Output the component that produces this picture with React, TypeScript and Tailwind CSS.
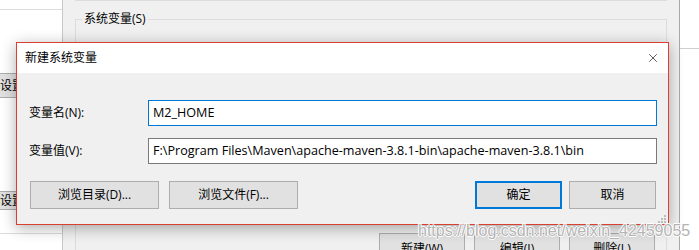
import { X } from "lucide-react";

const ui = "font-['Open_Sans','Noto_Sans_CJK_SC',sans-serif]";

function WinButton({
  label,
  primary,
  className = "",
}: {
  label: string;
  primary?: boolean;
  className?: string;
}) {
  return (
    <div
      className={`flex items-center justify-center bg-[#e1e1e1] text-[12px] text-black ${
        primary ? "border-2 border-[#0078d7]" : "border border-[#adadad]"
      } ${className}`}
    >
      {label}
    </div>
  );
}

function Field({
  label,
  value,
  focused,
}: {
  label: string;
  value: string;
  focused?: boolean;
}) {
  return (
    <div className="flex items-center">
      <div className="w-[131px] pl-[12px] text-[12px] leading-none text-black">{label}</div>
      <div
        className={`flex h-[26px] w-[509px] items-center bg-white pl-[4px] text-[12.6px] text-black ${
          focused ? "border border-[#0078d7]" : "border border-[#7a7a7a]"
        }`}
      >
        {value}
      </div>
    </div>
  );
}

function Grip() {
  const dots = [
    [2, 0],
    [1, 1],
    [2, 1],
    [0, 2],
    [1, 2],
    [2, 2],
  ];
  return (
    <div className="absolute bottom-[1px] right-[2px] h-[8px] w-[8px]">
      {dots.map(([c, r], i) => (
        <div
          key={i}
          className="absolute h-[2px] w-[2px] bg-[#bcbcbc]"
          style={{ left: c * 3, top: r * 3 }}
        />
      ))}
    </div>
  );
}

export default function App() {
  return (
    <div className={`relative h-[250px] w-[699px] overflow-hidden bg-white ${ui}`}>
      {/* background windows */}
      <div className="flex h-full">
        {/* left panel */}
        <div className="flex w-[62px] flex-col bg-white">
          <div className="mt-[9px] h-px bg-[#dcdcdc]" />
          <div className="mt-[63px] -ml-[18px] flex h-[25px] w-[70px] items-center border border-[#adadad] bg-[#e1e1e1] pl-[17px] text-[12px]">
            设置
          </div>
          <div className="mt-[93px] -ml-[18px] flex h-[19px] w-[70px] items-center border border-[#adadad] bg-[#e1e1e1] pl-[17px] text-[12px]">
            设置
          </div>
          <div className="mt-[23px] h-px bg-[#dcdcdc]" />
        </div>
        {/* main env window */}
        <div className="flex w-[618px] flex-col border-l border-r border-l-[#c8c8c8] border-r-[#a8a8a8] bg-[#f0f0f0] pl-[12px] pr-[12px]">
          <div className="h-[10px] border-b border-l border-r border-[#dcdcdc]" />
          <div className="relative mt-[18px] flex-1 border-l border-r border-t border-[#dcdcdc]">
            <div className="absolute -top-[9px] left-[6px] bg-[#f0f0f0] px-[2px] text-[12px] leading-[16px] text-black">
              系统变量(S)
            </div>
            <div className="mt-[213px] flex gap-[9px] pl-[303px]">
              <WinButton label="新建(W)" className="h-[26px] w-[86px] items-start pt-[6px]" />
              <WinButton label="编辑(I)" className="h-[26px] w-[86px] items-start pt-[6px]" />
              <WinButton label="删除(L)" className="h-[26px] w-[86px] items-start pt-[6px]" />
            </div>
          </div>
        </div>
        {/* right edge */}
        <div className="flex flex-1 flex-col bg-white">
          <div className="mt-[48px] h-px bg-[#cfcfcf]" />
        </div>
      </div>

      {/* dialog */}
      <div className="absolute left-[16px] top-[42px] flex h-[183px] w-[653px] flex-col border border-[#d9402f] bg-[#f0f0f0] shadow-[0_3px_14px_rgba(0,0,0,0.32)]">
        <div className="flex h-[30px] items-center justify-between bg-white pl-[8px] pr-[6px]">
          <span className="text-[12px] text-black">新建系统变量</span>
          <X size={14} strokeWidth={1.1} className="mr-[2px] text-black" />
        </div>
        <div className="relative flex flex-1 flex-col pt-[27px]">
          <div className="flex flex-col gap-[12px]">
            <Field label="变量名(N):" value="M2_HOME" focused />
            <Field
              label="变量值(V):"
              value="F:\Program Files\Maven\apache-maven-3.8.1-bin\apache-maven-3.8.1\bin"
            />
          </div>
          <div className="mt-[17px] flex items-center pl-[13px] pr-[12px]">
            <WinButton label="浏览目录(D)..." className="h-[28px] w-[129px]" />
            <WinButton label="浏览文件(F)..." className="ml-[10px] h-[28px] w-[129px]" />
            <div className="flex-1" />
            <WinButton label="确定" primary className="h-[28px] w-[87px]" />
            <WinButton label="取消" className="ml-[7px] h-[28px] w-[87px]" />
          </div>
          <Grip />
        </div>
      </div>

      {/* watermark */}
      <div className="absolute left-[418px] top-[219px] font-['Liberation_Sans',sans-serif] text-[16px] text-[#b4b4b4] [text-shadow:1px_0_0_#fff,-1px_0_0_#fff,0_1px_0_#fff,0_-1px_0_#fff]">
        https://blog.csdn.net/weixin_42459055
      </div>
    </div>
  );
}
